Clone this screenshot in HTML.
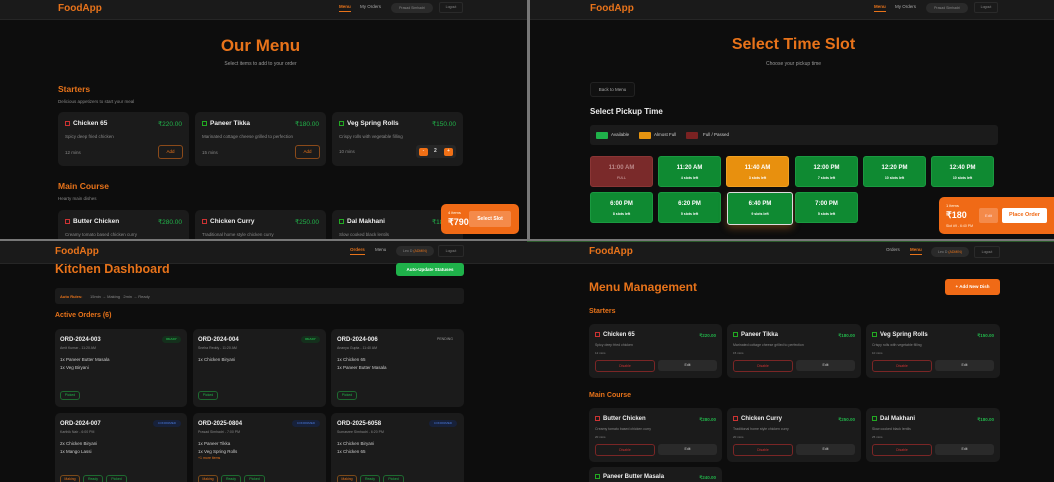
<!DOCTYPE html>
<html><head><meta charset="utf-8"><style>
*{box-sizing:border-box;margin:0;padding:0}
body{width:1054px;height:482px;background:#777;font-family:"Liberation Sans",sans-serif;position:relative;overflow:hidden;color:#ddd}
.q{position:absolute;background:#0d0d0d;overflow:hidden}
.a{position:absolute;white-space:nowrap}
.nav{position:absolute;left:0;top:0;right:0;background:#1a1a1a;border-bottom:1px solid #262626}
.logo{color:#e8731a;font-weight:bold;font-size:10px}
.or{color:#e8731a}
.card{position:absolute;background:#1b1b1b;border-radius:5px}
.g{color:#22b34a}
.sm{font-size:4.5px;color:#888}
.t{font-size:6.5px;font-weight:bold;color:#eee}
.ic{display:inline-block;width:5px;height:5px;border:1px solid #c33;vertical-align:middle;margin-right:3px;position:relative}
.ic.v{border-color:#2a2}
.ic:after{content:"";position:absolute;left:1px;top:1px;width:1px;height:1px;background:inherit}
.slot{position:absolute;width:63px;height:31px;border-radius:3px;background:#0f8a32;border:1px solid #1a9a40;text-align:center;color:#fff;font-weight:bold;font-size:6px;padding-top:8px}
.slot div{font-size:3.5px;margin-top:5px;font-weight:bold}
.btn{position:absolute;border-radius:3px;font-size:4.5px;text-align:center}
</style></head><body>

<!-- TL -->
<div class="q" style="left:0;top:0;width:527px;height:239px">
 <div class="nav" style="height:20px">
  <div class="a logo" style="left:58px;top:3px">FoodApp</div>
  <div class="a or" style="left:339px;top:4px;font-size:4.5px;font-weight:bold;border-bottom:1px solid #e8731a;padding-bottom:2px">Menu</div>
  <div class="a" style="left:360px;top:4px;font-size:4.5px;color:#aaa">My Orders</div>
  <div class="a" style="left:391px;top:3px;width:42px;height:10px;border-radius:5px;background:#2a2a2a;font-size:3.5px;color:#888;text-align:center;line-height:10px">Prasad Simhadri</div>
  <div class="a" style="left:439px;top:2px;width:24px;height:11px;border:1px solid #2a2a2a;border-radius:2px;font-size:3.5px;color:#888;text-align:center;line-height:9px">Logout</div>
 </div>
 <div class="a or" style="left:0;width:521px;text-align:center;top:36px;font-size:17px;font-weight:bold">Our Menu</div>
 <div class="a" style="left:0;width:521px;text-align:center;top:61px;font-size:5px;color:#999">Select items to add to your order</div>
 <div class="a or" style="left:58px;top:84px;font-size:8.5px;font-weight:bold">Starters</div>
 <div class="a sm" style="left:58px;top:99px">Delicious appetizers to start your meal</div>
 <div class="card" style="left:58px;top:112px;width:131px;height:54px"><div class="a t" style="left:7px;top:8px"><span class="ic"></span>Chicken 65</div><div class="a g" style="right:7px;top:8px;font-size:6.5px">₹220.00</div><div class="a sm" style="left:7px;top:22px">Spicy deep fried chicken</div><div class="a sm" style="left:7px;top:38px">12 mins</div><div class="btn or" style="left:100px;top:33px;width:25px;height:14px;border:1px solid #8a4a1a;line-height:12px">Add</div></div>
 <div class="card" style="left:195px;top:112px;width:131px;height:54px"><div class="a t" style="left:7px;top:8px"><span class="ic v"></span>Paneer Tikka</div><div class="a g" style="right:7px;top:8px;font-size:6.5px">₹180.00</div><div class="a sm" style="left:7px;top:22px">Marinated cottage cheese grilled to perfection</div><div class="a sm" style="left:7px;top:38px">15 mins</div><div class="btn or" style="left:100px;top:33px;width:25px;height:14px;border:1px solid #8a4a1a;line-height:12px">Add</div></div>
 <div class="card" style="left:332px;top:112px;width:131px;height:54px"><div class="a t" style="left:7px;top:8px"><span class="ic v"></span>Veg Spring Rolls</div><div class="a g" style="right:7px;top:8px;font-size:6.5px">₹150.00</div><div class="a sm" style="left:7px;top:22px">Crispy rolls with vegetable filling</div><div class="a sm" style="left:7px;top:37px">10 mins</div>
  <div class="a" style="left:84px;top:33px;width:40px;height:13px;background:#262626;border-radius:3px"><div class="a" style="left:3px;top:3px;width:9px;height:8px;background:#f07016;border-radius:2px;color:#fff;font-size:5px;text-align:center">-</div><div class="a" style="left:18px;top:3px;font-size:5px;color:#ddd;font-weight:bold">2</div><div class="a" style="left:28px;top:3px;width:9px;height:8px;background:#f07016;border-radius:2px;color:#fff;font-size:5px;text-align:center">+</div></div></div>
 <div class="a or" style="left:58px;top:181px;font-size:8.5px;font-weight:bold">Main Course</div>
 <div class="a sm" style="left:58px;top:196px">Hearty main dishes</div>
 <div class="card" style="left:58px;top:210px;width:131px;height:40px"><div class="a t" style="left:7px;top:8px"><span class="ic"></span>Butter Chicken</div><div class="a g" style="right:7px;top:8px;font-size:6.5px">₹280.00</div><div class="a sm" style="left:7px;top:22px">Creamy tomato based chicken curry</div></div>
 <div class="card" style="left:195px;top:210px;width:131px;height:40px"><div class="a t" style="left:7px;top:8px"><span class="ic"></span>Chicken Curry</div><div class="a g" style="right:7px;top:8px;font-size:6.5px">₹250.00</div><div class="a sm" style="left:7px;top:22px">Traditional home style chicken curry</div></div>
 <div class="card" style="left:332px;top:210px;width:131px;height:40px"><div class="a t" style="left:7px;top:8px"><span class="ic v"></span>Dal Makhani</div><div class="a g" style="right:7px;top:8px;font-size:6.5px">₹180.00</div><div class="a sm" style="left:7px;top:22px">Slow cooked black lentils</div></div>
 <div class="a" style="left:441px;top:204px;width:78px;height:30px;background:#f06a16;border-radius:5px">
  <div class="a" style="left:7px;top:6px;font-size:4px;color:#ffe">4 items</div>
  <div class="a" style="left:7px;top:13px;font-size:9px;font-weight:bold;color:#fff">₹790</div>
  <div class="a" style="left:28px;top:7px;width:42px;height:16px;background:#f48a4a;border-radius:2px;font-size:5px;color:#fff;font-weight:bold;text-align:center;line-height:16px">Select Slot</div>
 </div>
</div>

<!-- TR -->
<div class="q" style="left:530px;top:0;width:524px;height:239px">
 <div class="nav" style="height:20px">
  <div class="a logo" style="left:60px;top:3px">FoodApp</div>
  <div class="a or" style="left:344px;top:4px;font-size:4.5px;font-weight:bold;border-bottom:1px solid #e8731a;padding-bottom:2px">Menu</div>
  <div class="a" style="left:365px;top:4px;font-size:4.5px;color:#aaa">My Orders</div>
  <div class="a" style="left:396px;top:3px;width:42px;height:10px;border-radius:5px;background:#2a2a2a;font-size:3.5px;color:#888;text-align:center;line-height:10px">Prasad Simhadri</div>
  <div class="a" style="left:444px;top:2px;width:24px;height:11px;border:1px solid #2a2a2a;border-radius:2px;font-size:3.5px;color:#888;text-align:center;line-height:9px">Logout</div>
 </div>
 <div class="a or" style="left:0;width:527px;text-align:center;top:36px;font-size:16px;font-weight:bold">Select Time Slot</div>
 <div class="a" style="left:0;width:527px;text-align:center;top:61px;font-size:5px;color:#999">Choose your pickup time</div>
 <div class="btn" style="left:60px;top:82px;width:45px;height:15px;border:1px solid #222;background:#111;color:#aaa;line-height:13px">Back to Menu</div>
 <div class="a" style="left:60px;top:107px;font-size:8px;font-weight:bold;color:#eee">Select Pickup Time</div>
 <div class="a" style="left:60px;top:125px;width:408px;height:20px;background:#1b1b1b;border-radius:3px;font-size:4.5px;color:#ccc">
  <span class="a" style="left:6px;top:7px;width:12px;height:7px;background:#1fb24a;border-radius:1px"></span><span class="a" style="left:21px;top:7px">Available</span>
  <span class="a" style="left:49px;top:7px;width:12px;height:7px;background:#e69410;border-radius:1px"></span><span class="a" style="left:64px;top:7px">Almost Full</span>
  <span class="a" style="left:96px;top:7px;width:12px;height:7px;background:#7a2222;border-radius:1px"></span><span class="a" style="left:113px;top:7px">Full / Passed</span>
 </div>
 <div class="slot" style="left:60px;top:156px;background:#7a2a2a;border-color:#8a3535;color:#b88">11:00 AM<div>FULL</div></div>
 <div class="slot" style="left:128px;top:156px">11:20 AM<div>4 slots left</div></div>
 <div class="slot" style="left:196px;top:156px;background:#e8900e;border-color:#f0a020">11:40 AM<div>3 slots left</div></div>
 <div class="slot" style="left:265px;top:156px">12:00 PM<div>7 slots left</div></div>
 <div class="slot" style="left:333px;top:156px">12:20 PM<div>10 slots left</div></div>
 <div class="slot" style="left:401px;top:156px">12:40 PM<div>10 slots left</div></div>
 <div class="slot" style="left:60px;top:192px">6:00 PM<div>8 slots left</div></div>
 <div class="slot" style="left:128px;top:192px">6:20 PM<div>5 slots left</div></div>
 <div class="slot" style="left:197px;top:192px;width:66px;height:33px;border:1px solid #ddd;box-shadow:0 3px 8px rgba(240,140,40,.35)">6:40 PM<div>9 slots left</div></div>
 <div class="slot" style="left:265px;top:192px">7:00 PM<div>5 slots left</div></div>
 <div class="a" style="left:879px;left:409px;top:197px;width:120px;height:37px;background:#f06a16;border-radius:5px">
  <div class="a" style="left:7px;top:6px;font-size:4px;color:#ffe">1 items</div>
  <div class="a" style="left:7px;top:13px;font-size:9px;font-weight:bold;color:#fff">₹180</div>
  <div class="a" style="left:7px;top:27px;font-size:3.5px;color:#fed">Slot #9 - 6:40 PM</div>
  <div class="a" style="left:40px;top:11px;width:19px;height:15px;background:#f48a4a;border-radius:2px;font-size:4px;color:#fdd;text-align:center;line-height:15px">Edit</div>
  <div class="a" style="left:63px;top:11px;width:45px;height:15px;background:#fff;border-radius:2px;font-size:5.5px;color:#f06a16;font-weight:bold;text-align:center;line-height:15px">Place Order</div>
 </div>
</div>

<!-- BL -->
<div class="q" style="left:0;top:241px;width:527px;height:241px">
 <div class="a or" style="left:55px;top:21px;font-size:12.5px;font-weight:bold">Kitchen Dashboard</div>
 <div class="nav" style="height:23px">
  <div class="a logo" style="left:55px;top:5px">FoodApp</div>
  <div class="a or" style="left:350px;top:6px;font-size:4.5px;font-weight:bold;border-bottom:1px solid #e8731a;padding-bottom:2px">Orders</div>
  <div class="a" style="left:375px;top:6px;font-size:4.5px;color:#aaa">Menu</div>
  <div class="a" style="left:396px;top:5px;width:38px;height:10px;border-radius:5px;background:#2a2a2a;font-size:3.5px;color:#888;text-align:center;line-height:10px">Leo D <span class="or">(ADMIN)</span></div>
  <div class="a" style="left:438px;top:4px;width:26px;height:12px;border:1px solid #2a2a2a;border-radius:2px;font-size:3.5px;color:#888;text-align:center;line-height:10px">Logout</div>
 </div>
 <div class="btn" style="left:396px;top:22px;width:68px;height:13px;background:#1fb24a;color:#fff;font-weight:bold;line-height:13px">Auto-Update Statuses</div>
 <div class="a" style="left:55px;top:47px;width:409px;height:16px;background:#1b1b1b;border-radius:3px;font-size:4px;color:#888"><span class="a or" style="left:5px;top:6px;font-weight:bold">Auto Rules:</span><span class="a" style="left:35px;top:6px">15min → Making &nbsp; 2min → Ready</span></div>
 <div class="a or" style="left:55px;top:71px;font-size:7px;font-weight:bold">Active Orders (6)</div>
 <div class="card" style="left:55px;top:88px;width:132px;height:78px"><div class="a t" style="left:5px;top:8px;font-size:6px">ORD-2024-003</div><div class="btn g" style="left:107px;top:7px;width:19px;height:7px;background:#14301c;border-radius:4px;font-size:3px;line-height:7px;font-weight:bold">READY</div><div class="a sm" style="left:5px;top:17px;font-size:3.5px">Amit Kumar - 11:20 AM</div><div class="a" style="left:5px;top:27px;font-size:4.5px;color:#ccc;line-height:8px">1x Paneer Butter Masala<br>1x Veg Biryani</div><div class="btn g" style="left:5px;top:62px;width:20px;height:9px;border:1px solid #1e6a30;font-size:3.5px;line-height:7px">Picked</div></div>
 <div class="card" style="left:193px;top:88px;width:133px;height:78px"><div class="a t" style="left:5px;top:8px;font-size:6px">ORD-2024-004</div><div class="btn g" style="left:108px;top:7px;width:19px;height:7px;background:#14301c;border-radius:4px;font-size:3px;line-height:7px;font-weight:bold">READY</div><div class="a sm" style="left:5px;top:17px;font-size:3.5px">Sneha Reddy - 11:20 AM</div><div class="a" style="left:5px;top:27px;font-size:4.5px;color:#ccc;line-height:8px">1x Chicken Biryani</div><div class="btn g" style="left:5px;top:62px;width:20px;height:9px;border:1px solid #1e6a30;font-size:3.5px;line-height:7px">Picked</div></div>
 <div class="card" style="left:331px;top:88px;width:133px;height:78px"><div class="a t" style="left:6px;top:8px;font-size:6px">ORD-2024-006</div><div class="a" style="left:106px;top:8px;font-size:3.5px;color:#999">PENDING</div><div class="a sm" style="left:6px;top:17px;font-size:3.5px">Ananya Gupta - 11:40 AM</div><div class="a" style="left:6px;top:27px;font-size:4.5px;color:#ccc;line-height:8px">1x Chicken 65<br>1x Paneer Butter Masala</div><div class="btn g" style="left:6px;top:62px;width:20px;height:9px;border:1px solid #1e6a30;font-size:3.5px;line-height:7px">Picked</div></div>
 <div class="card" style="left:55px;top:172px;width:132px;height:80px"><div class="a t" style="left:5px;top:8px;font-size:6px">ORD-2024-007</div><div class="btn" style="left:98px;top:7px;width:28px;height:7px;background:#17213a;color:#4a7ae0;border-radius:4px;font-size:3px;line-height:7px">CONFIRMED</div><div class="a sm" style="left:5px;top:17px;font-size:3.5px">Karthik Nair - 6:00 PM</div><div class="a" style="left:5px;top:27px;font-size:4.5px;color:#ccc;line-height:8px">2x Chicken Biryani<br>1x Mango Lassi</div><div class="btn or" style="left:5px;top:62px;width:20px;height:9px;border:1px solid #7a4a1a;font-size:3.5px;line-height:7px">Making</div><div class="btn g" style="left:28px;top:62px;width:20px;height:9px;border:1px solid #1e6a30;font-size:3.5px;line-height:7px">Ready</div><div class="btn g" style="left:51px;top:62px;width:21px;height:9px;border:1px solid #1e6a30;font-size:3.5px;line-height:7px">Picked</div></div>
 <div class="card" style="left:193px;top:172px;width:133px;height:80px"><div class="a t" style="left:5px;top:8px;font-size:6px">ORD-2025-0804</div><div class="btn" style="left:99px;top:7px;width:28px;height:7px;background:#17213a;color:#4a7ae0;border-radius:4px;font-size:3px;line-height:7px">CONFIRMED</div><div class="a sm" style="left:5px;top:17px;font-size:3.5px">Prasad Simhadri - 7:00 PM</div><div class="a" style="left:5px;top:27px;font-size:4.5px;color:#ccc;line-height:8px">1x Paneer Tikka<br>1x Veg Spring Rolls</div><div class="a or" style="left:5px;top:43px;font-size:3.5px">+1 more items</div><div class="btn or" style="left:5px;top:62px;width:20px;height:9px;border:1px solid #7a4a1a;font-size:3.5px;line-height:7px">Making</div><div class="btn g" style="left:28px;top:62px;width:20px;height:9px;border:1px solid #1e6a30;font-size:3.5px;line-height:7px">Ready</div><div class="btn g" style="left:51px;top:62px;width:21px;height:9px;border:1px solid #1e6a30;font-size:3.5px;line-height:7px">Picked</div></div>
 <div class="card" style="left:331px;top:172px;width:133px;height:80px"><div class="a t" style="left:6px;top:8px;font-size:6px">ORD-2025-6058</div><div class="btn" style="left:98px;top:7px;width:28px;height:7px;background:#17213a;color:#4a7ae0;border-radius:4px;font-size:3px;line-height:7px">CONFIRMED</div><div class="a sm" style="left:6px;top:17px;font-size:3.5px">Sumasree Simhadri - 6:20 PM</div><div class="a" style="left:6px;top:27px;font-size:4.5px;color:#ccc;line-height:8px">1x Chicken Biryani<br>1x Chicken 65</div><div class="btn or" style="left:6px;top:62px;width:20px;height:9px;border:1px solid #7a4a1a;font-size:3.5px;line-height:7px">Making</div><div class="btn g" style="left:29px;top:62px;width:20px;height:9px;border:1px solid #1e6a30;font-size:3.5px;line-height:7px">Ready</div><div class="btn g" style="left:52px;top:62px;width:21px;height:9px;border:1px solid #1e6a30;font-size:3.5px;line-height:7px">Picked</div></div>
</div>

<!-- BR -->
<div class="q" style="left:527px;top:241px;width:527px;height:241px">
 <div class="nav" style="height:23px;border-top:1px solid #2a5a2a">
  <div class="a logo" style="left:62px;top:4px">FoodApp</div>
  <div class="a" style="left:359px;top:5px;font-size:4.5px;color:#aaa">Orders</div>
  <div class="a or" style="left:383px;top:5px;font-size:4.5px;font-weight:bold;border-bottom:1px solid #e8731a;padding-bottom:2px">Menu</div>
  <div class="a" style="left:404px;top:5px;width:38px;height:10px;border-radius:5px;background:#2a2a2a;font-size:3.5px;color:#888;text-align:center;line-height:10px">Leo D <span class="or">(ADMIN)</span></div>
  <div class="a" style="left:447px;top:4px;width:26px;height:12px;border:1px solid #2a2a2a;border-radius:2px;font-size:3.5px;color:#888;text-align:center;line-height:10px">Logout</div>
 </div>
 <div class="a or" style="left:62px;top:39px;font-size:12px;font-weight:bold">Menu Management</div>
 <div class="btn" style="left:418px;top:38px;width:55px;height:16px;background:#f06a16;color:#fff;font-weight:bold;line-height:16px">+ Add New Dish</div>
 <div class="a or" style="left:62px;top:67px;font-size:7px;font-weight:bold">Starters</div>
 <div class="a or" style="left:62px;top:151px;font-size:7px;font-weight:bold">Main Course</div>
 <div id="mm"></div>
 <div class="card" style="left:62px;top:83px;width:133px;height:54px"><div class="a t" style="left:6px;top:8px;font-size:6px"><span class="ic"></span>Chicken 65</div><div class="a g" style="right:6px;top:9px;font-size:4.5px;font-weight:bold">₹220.00</div><div class="a sm" style="left:6px;top:19px;font-size:3.5px">Spicy deep fried chicken</div><div class="a sm" style="left:6px;top:27px;font-size:3px">12 mins</div><div class="btn" style="left:6px;top:36px;width:60px;height:12px;border:1px solid #7a2626;color:#c33;font-size:3.5px;line-height:10px">Disable</div><div class="btn" style="left:69px;top:36px;width:59px;height:11px;background:#2a2a2a;color:#ccc;font-size:3.5px;line-height:11px">Edit</div></div>
 <div class="card" style="left:200px;top:83px;width:134px;height:54px"><div class="a t" style="left:6px;top:8px;font-size:6px"><span class="ic v"></span>Paneer Tikka</div><div class="a g" style="right:6px;top:9px;font-size:4.5px;font-weight:bold">₹180.00</div><div class="a sm" style="left:6px;top:19px;font-size:3.5px">Marinated cottage cheese grilled to perfection</div><div class="a sm" style="left:6px;top:27px;font-size:3px">15 mins</div><div class="btn" style="left:6px;top:36px;width:60px;height:12px;border:1px solid #7a2626;color:#c33;font-size:3.5px;line-height:10px">Disable</div><div class="btn" style="left:69px;top:36px;width:59px;height:11px;background:#2a2a2a;color:#ccc;font-size:3.5px;line-height:11px">Edit</div></div>
 <div class="card" style="left:339px;top:83px;width:134px;height:54px"><div class="a t" style="left:6px;top:8px;font-size:6px"><span class="ic v"></span>Veg Spring Rolls</div><div class="a g" style="right:6px;top:9px;font-size:4.5px;font-weight:bold">₹150.00</div><div class="a sm" style="left:6px;top:19px;font-size:3.5px">Crispy rolls with vegetable filling</div><div class="a sm" style="left:6px;top:27px;font-size:3px">10 mins</div><div class="btn" style="left:6px;top:36px;width:60px;height:12px;border:1px solid #7a2626;color:#c33;font-size:3.5px;line-height:10px">Disable</div><div class="btn" style="left:69px;top:36px;width:59px;height:11px;background:#2a2a2a;color:#ccc;font-size:3.5px;line-height:11px">Edit</div></div>
 <div class="card" style="left:62px;top:167px;width:133px;height:54px"><div class="a t" style="left:6px;top:8px;font-size:6px"><span class="ic"></span>Butter Chicken</div><div class="a g" style="right:6px;top:9px;font-size:4.5px;font-weight:bold">₹280.00</div><div class="a sm" style="left:6px;top:19px;font-size:3.5px">Creamy tomato based chicken curry</div><div class="a sm" style="left:6px;top:27px;font-size:3px">20 mins</div><div class="btn" style="left:6px;top:36px;width:60px;height:12px;border:1px solid #7a2626;color:#c33;font-size:3.5px;line-height:10px">Disable</div><div class="btn" style="left:69px;top:36px;width:59px;height:11px;background:#2a2a2a;color:#ccc;font-size:3.5px;line-height:11px">Edit</div></div>
 <div class="card" style="left:200px;top:167px;width:134px;height:54px"><div class="a t" style="left:6px;top:8px;font-size:6px"><span class="ic"></span>Chicken Curry</div><div class="a g" style="right:6px;top:9px;font-size:4.5px;font-weight:bold">₹250.00</div><div class="a sm" style="left:6px;top:19px;font-size:3.5px">Traditional home style chicken curry</div><div class="a sm" style="left:6px;top:27px;font-size:3px">20 mins</div><div class="btn" style="left:6px;top:36px;width:60px;height:12px;border:1px solid #7a2626;color:#c33;font-size:3.5px;line-height:10px">Disable</div><div class="btn" style="left:69px;top:36px;width:59px;height:11px;background:#2a2a2a;color:#ccc;font-size:3.5px;line-height:11px">Edit</div></div>
 <div class="card" style="left:339px;top:167px;width:134px;height:54px"><div class="a t" style="left:6px;top:8px;font-size:6px"><span class="ic v"></span>Dal Makhani</div><div class="a g" style="right:6px;top:9px;font-size:4.5px;font-weight:bold">₹180.00</div><div class="a sm" style="left:6px;top:19px;font-size:3.5px">Slow cooked black lentils</div><div class="a sm" style="left:6px;top:27px;font-size:3px">25 mins</div><div class="btn" style="left:6px;top:36px;width:60px;height:12px;border:1px solid #7a2626;color:#c33;font-size:3.5px;line-height:10px">Disable</div><div class="btn" style="left:69px;top:36px;width:59px;height:11px;background:#2a2a2a;color:#ccc;font-size:3.5px;line-height:11px">Edit</div></div>
 <div class="card" style="left:62px;top:226px;width:133px;height:30px"><div class="a t" style="left:6px;top:7px;font-size:6px"><span class="ic v"></span>Paneer Butter Masala</div><div class="a g" style="right:6px;top:8px;font-size:4.5px;font-weight:bold">₹240.00</div></div>
</div>
</body></html>
